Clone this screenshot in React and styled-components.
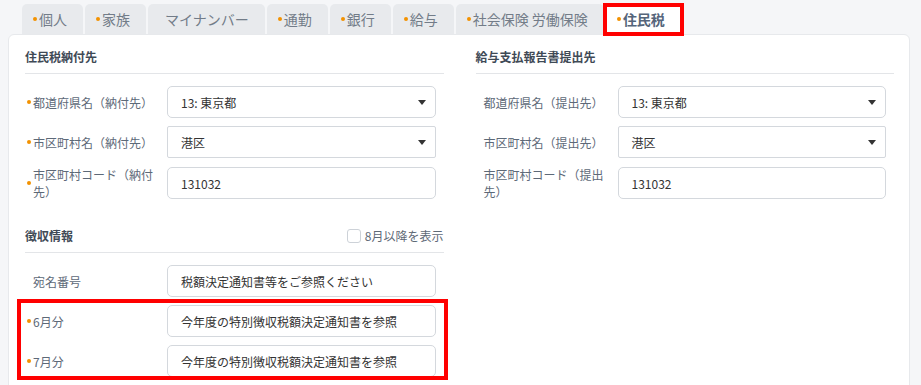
import React from 'react'
import styled, { createGlobalStyle, css } from 'styled-components'

const GlobalStyle = createGlobalStyle`
  html, body {
    margin: 0;
    padding: 0;
    overflow: hidden;
    background: #f5f6f8;
    font-family: "Noto Sans CJK JP", "Noto Sans", sans-serif;
  }
  * { box-sizing: border-box; }
`

const tabs = [
  { label: '個人', required: true },
  { label: '家族', required: true },
  { label: 'マイナンバー' },
  { label: '通勤', required: true },
  { label: '銀行', required: true },
  { label: '給与', required: true },
  { label: '社会保険 労働保険', required: true },
  { label: '住民税', required: true, active: true },
]

const dot = css`
  &::before {
    content: '';
    position: absolute;
    top: 50%;
    width: 4px;
    height: 4px;
    margin-top: -2px;
    border-radius: 50%;
    background: #f39200;
  }
`

const App = () => (
  <Page>
    <GlobalStyle />
    <TabBar>
      {tabs.map(t => (
        <Tab key={t.label} $required={t.required} $active={t.active}>
          {t.label}
        </Tab>
      ))}
    </TabBar>
    <Panel>
      <Column>
        <SectionHead>
          <Heading>住民税納付先</Heading>
        </SectionHead>
        <Rows>
          <Row>
            <Label $required>都道府県名（納付先）</Label>
            <Select>13: 東京都<Caret /></Select>
          </Row>
          <Row>
            <Label $required>市区町村名（納付先）</Label>
            <Select $square>港区<Caret /></Select>
          </Row>
          <Row>
            <Label $required>市区町村コード（納付先）</Label>
            <Input readOnly value="131032" />
          </Row>
        </Rows>

        <SectionHead $spaced>
          <Heading>徴収情報</Heading>
          <Check>
            <Box />
            8月以降を表示
          </Check>
        </SectionHead>
        <Rows>
          <Row>
            <Label>宛名番号</Label>
            <Input readOnly value="税額決定通知書等をご参照ください" />
          </Row>
          <Highlight>
            <Row>
              <Label $required>6月分</Label>
              <Input readOnly value="今年度の特別徴収税額決定通知書を参照" />
            </Row>
            <Row>
              <Label $required>7月分</Label>
              <Input readOnly value="今年度の特別徴収税額決定通知書を参照" />
            </Row>
          </Highlight>
        </Rows>
      </Column>

      <Column>
        <SectionHead>
          <Heading>給与支払報告書提出先</Heading>
        </SectionHead>
        <Rows>
          <Row>
            <Label>都道府県名（提出先）</Label>
            <Select>13: 東京都<Caret /></Select>
          </Row>
          <Row>
            <Label>市区町村名（提出先）</Label>
            <Select $square>港区<Caret /></Select>
          </Row>
          <Row>
            <Label>市区町村コード（提出先）</Label>
            <Input readOnly value="131032" />
          </Row>
        </Rows>
      </Column>
    </Panel>
  </Page>
)

export default App

const Page = styled.div`
  padding: 4px 11px 0 8px;
`

const TabBar = styled.div`
  display: flex;
  gap: 2px;
  margin-left: 14px;
  position: relative;
  z-index: 1;
`

const Tab = styled.div`
  position: relative;
  height: 30px;
  display: flex;
  align-items: center;
  padding: 0 16px 0 17px;
  border-radius: 5px 5px 0 0;
  background: ${p => (p.$active ? '#fff' : '#e8eaed')};
  color: ${p => (p.$active ? '#55657a' : '#727c88')};
  font-weight: ${p => (p.$active ? 700 : 400)};
  font-size: 14px;
  white-space: nowrap;

  ${p => p.$required && dot}
  &::before { left: 11px; }

  ${p =>
    p.$active &&
    css`
      &::after {
        content: '';
        position: absolute;
        top: -1px;
        left: -3px;
        right: -3px;
        bottom: -2px;
        border: 4px solid #ff0000;
      }
    `}
`

const Panel = styled.div`
  display: grid;
  grid-template-columns: 1fr 1fr;
  column-gap: 32px;
  background: #fff;
  border: 1px solid #e7e9ec;
  border-radius: 6px;
  padding: 0 15px 30px 16px;
`

const Column = styled.div`
  padding-top: 13px;
`

const SectionHead = styled.div`
  display: flex;
  align-items: center;
  justify-content: space-between;
  padding-bottom: 7px;
  border-bottom: 1px solid #e3e5e8;
  margin-top: ${p => (p.$spaced ? '27px' : '0')};
`

const Heading = styled.div`
  font-size: 12px;
  line-height: 18px;
  font-weight: 700;
  color: #3f4a56;
`

const Check = styled.label`
  display: flex;
  align-items: center;
  gap: 4px;
  font-size: 12px;
  line-height: 18px;
  color: #5f6a77;
`

const Box = styled.span`
  width: 14px;
  height: 14px;
  border: 1px solid #cdd2d8;
  border-radius: 3px;
  background: #fff;
`

const Rows = styled.div`
  display: flex;
  flex-direction: column;
  gap: 8px;
  margin-top: 12px;
`

const Highlight = styled.div`
  position: relative;
  display: flex;
  flex-direction: column;
  gap: 8px;

  &::after {
    content: '';
    position: absolute;
    top: -6px;
    left: -8px;
    right: -4px;
    bottom: -3px;
    border: 4px solid #ff0000;
    pointer-events: none;
  }
`

const Row = styled.div`
  display: grid;
  grid-template-columns: 142px 1fr;
  align-items: center;
  min-height: 32px;
  padding-right: 8px;
`

const Label = styled.div`
  position: relative;
  padding: 0 10px 0 8px;
  font-size: 12px;
  line-height: 17px;
  color: #5d6978;

  ${p => p.$required && dot}
  &::before { left: 2px; }
`

const field = css`
  width: 100%;
  height: 32px;
  border: 1px solid #d4d8dd;
  background: #fff;
  padding: 0 9px 0 13px;
  font-family: inherit;
  font-size: 12px;
  color: #333;
`

const Input = styled.input`
  ${field}
  border-radius: 5px;
  outline: none;
`

const Select = styled.div`
  ${field}
  display: flex;
  align-items: center;
  justify-content: space-between;
  border-radius: ${p => (p.$square ? '2px' : '5px')};
`

const Caret = styled.span`
  width: 0;
  height: 0;
  border-left: 4px solid transparent;
  border-right: 4px solid transparent;
  border-top: 5px solid #333;
`
